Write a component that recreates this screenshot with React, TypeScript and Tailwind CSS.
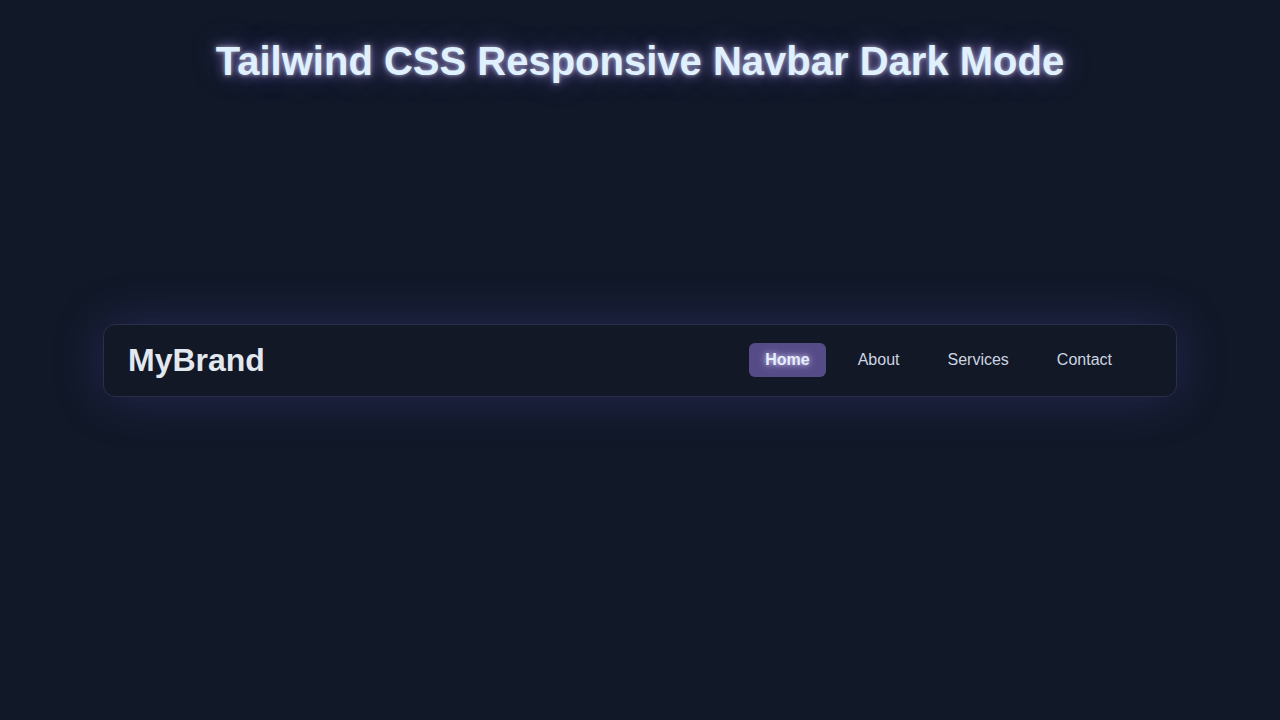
import React from "react";

const links = ["Home", "About", "Services", "Contact"];

export default function App() {
  return (
    <div
      className="min-h-screen w-full bg-[#111827] flex flex-col items-center"
      style={{ fontFamily: '"Liberation Sans", Arial, sans-serif' }}
    >
      <h1 className="mt-[41px] text-[40px] leading-10 font-bold text-[#dff0ff] [text-shadow:0_0_4px_rgba(255,255,255,0.55),0_0_12px_rgba(180,160,255,0.6),0_0_30px_rgba(139,120,246,0.4)]">
        Tailwind CSS Responsive Navbar Dark Mode
      </h1>

      <nav className="mt-[243px] w-[1074px] h-[73px] flex items-center justify-between rounded-xl border border-[#2b2e48] bg-[#131826] pl-6 pr-12 pb-px shadow-[0_0_50px_rgba(99,90,220,0.25)]">
        <span className="text-[32px] leading-9 font-bold text-[#e2e8f0]">MyBrand</span>
        <ul className="flex items-center gap-4">
          {links.map((l) =>
            l === "Home" ? (
              <li key={l}>
                <a className="block rounded-md bg-[#554b87] px-4 py-[5px] text-base leading-6 font-bold text-[#e6eeff] [text-shadow:0_0_4px_rgba(255,255,255,0.5),0_0_10px_rgba(200,190,255,0.8)]">
                  {l}
                </a>
              </li>
            ) : (
              <li key={l}>
                <a className="block px-4 py-[5px] text-base leading-6 text-[#cbd5e1]">{l}</a>
              </li>
            )
          )}
        </ul>
      </nav>
    </div>
  );
}
